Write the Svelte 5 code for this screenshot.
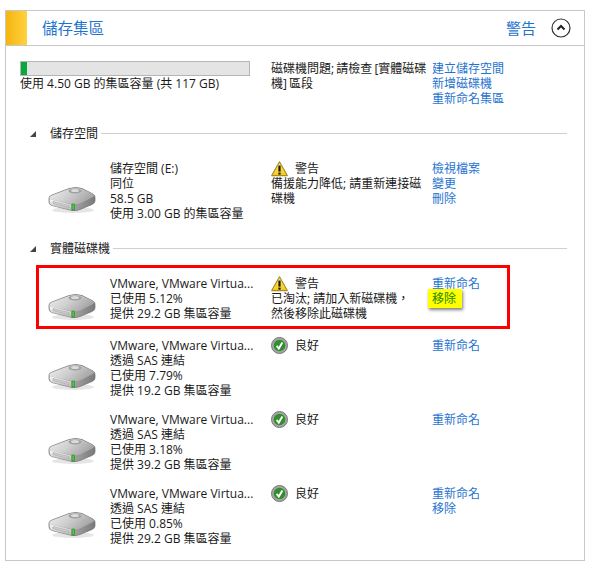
<script>
  const drives = [
    { lines: ['VMware, VMware Virtua...', '已使用 5.12%', '提供 29.2 GB 集區容量'], warn: true, status: '警告', msg: ['已淘汰; 請加入新磁碟機，', '然後移除此磁碟機'], actions: ['重新命名'] , mark: true, h: 62 },
    { lines: ['VMware, VMware Virtua...', '透過 SAS 連結', '已使用 7.79%', '提供 19.2 GB 集區容量'], status: '良好', msg: [], actions: ['重新命名'], h: 74 },
    { lines: ['VMware, VMware Virtua...', '透過 SAS 連結', '已使用 3.18%', '提供 39.2 GB 集區容量'], status: '良好', msg: [], actions: ['重新命名'], h: 74 },
    { lines: ['VMware, VMware Virtua...', '透過 SAS 連結', '已使用 0.85%', '提供 29.2 GB 集區容量'], status: '良好', msg: [], actions: ['重新命名', '移除'], h: 74 }
  ];
</script>

{#snippet disk()}
  <svg class="disk" width="48" height="28" viewBox="0 0 48 28">
    <defs>
      <linearGradient id="dtop" x1="0" y1="0" x2="1" y2="0.4">
        <stop offset="0" stop-color="#f0f0f0"/><stop offset="0.55" stop-color="#cdcdcd"/><stop offset="1" stop-color="#a6a6a6"/>
      </linearGradient>
      <linearGradient id="dfront" x1="0" y1="0" x2="0" y2="1">
        <stop offset="0" stop-color="#fafafa"/><stop offset="1" stop-color="#b5b5b5"/>
      </linearGradient>
      <linearGradient id="dside" x1="0" y1="0" x2="1" y2="0">
        <stop offset="0" stop-color="#d0d0d0"/><stop offset="1" stop-color="#7a7a7a"/>
      </linearGradient>
    </defs>
    <ellipse cx="25" cy="24" rx="21" ry="3" fill="#000" opacity="0.1"/>
    <path d="M1 12 Q1 10 4 9 L21 2.5 Q28 0.5 34 2.5 L45 8 Q47.5 9.5 47 12 L47 15 Q47 17 44 18.5 L32 23.5 Q28 25 24 24.5 L4 19.5 Q1 18.5 1 16 Z" fill="url(#dside)" stroke="#6e6e6e" stroke-width="0.7"/>
    <path d="M1.5 12 Q1.5 10.5 4 9.5 L21 3 Q28 1 34 3 L45 8 Q47 9.5 45 11 L33 17 Q29 19 24 18 L4 13.5 Q1.5 13 1.5 12 Z" fill="url(#dtop)"/>
    <ellipse cx="27" cy="5" rx="6.5" ry="2.6" fill="#a0a0a0"/>
    <ellipse cx="27" cy="4.6" rx="4" ry="1.5" fill="#dcdcdc"/>
    <path d="M2 13.5 L23 18.5 L23 24 L4 19.2 Q2 18.5 2 16.5 Z" fill="url(#dfront)"/>
    <path d="M5 15.5 L21 19.5 L21 21.5 L5 17.6 Z" fill="#cfcfcf" stroke="#929292" stroke-width="0.4"/>
    <rect x="24" y="18" width="2.6" height="6" fill="#45d03f" stroke="#1f6f1f" stroke-width="0.5"/>
  </svg>
{/snippet}

{#snippet warnIcon()}
  <svg class="sicon" width="17" height="16" viewBox="0 0 17 16">
    <defs>
      <linearGradient id="wg" x1="0" y1="0" x2="0" y2="1">
        <stop offset="0" stop-color="#ffe96e"/><stop offset="1" stop-color="#f5cb17"/>
      </linearGradient>
    </defs>
    <path d="M8.5 0.8 L16.3 14.6 L0.7 14.6 Z" fill="url(#wg)" stroke="#a68a2c" stroke-width="1.1" stroke-linejoin="round"/>
    <rect x="7.4" y="4.6" width="2.2" height="6" fill="#161616"/>
    <rect x="7.4" y="11.6" width="2.2" height="2" fill="#161616"/>
  </svg>
{/snippet}

{#snippet okIcon()}
  <svg class="sicon" width="17" height="17" viewBox="0 0 17 17">
    <circle cx="8.5" cy="8.5" r="8" fill="#a5a5a5" stroke="#777"/>
    <circle cx="8.5" cy="8.5" r="5.8" fill="#2f8f2a"/>
    <path d="M5.6 8.8 L7.8 11.6 L11.4 5.4" fill="none" stroke="#fff" stroke-width="1.9"/>
  </svg>
{/snippet}

<div class="page">
  <section class="panel">
    <header class="head">
      <div class="tab"></div>
      <h1>儲存集區</h1>
      <span class="alert">警告</span>
      <svg class="collapse" width="20" height="20" viewBox="0 0 20 20">
        <circle cx="10" cy="10" r="9" fill="#fff" stroke="#333" stroke-width="1.2"/>
        <path d="M6.5 11.5 L10 8 L13.5 11.5" fill="none" stroke="#222" stroke-width="2"/>
      </svg>
    </header>

    <div class="summary">
      <div class="cap">
        <div class="bar"><div class="fill"></div></div>
        <p>使用 4.50 GB 的集區容量 (共 117 GB)</p>
      </div>
      <p class="issue">磁碟機問題; 請檢查 [實體磁碟<br/>機] 區段</p>
      <div class="links">
        <a href="#a">建立儲存空間</a>
        <a href="#a">新增磁碟機</a>
        <a href="#a">重新命名集區</a>
      </div>
    </div>

    <div class="sechead first"><i class="tri"></i><span>儲存空間</span><b></b></div>

    <div class="row spaces">
      <div class="ic">{@render disk()}</div>
      <div class="info">
        <div>儲存空間 (E:)</div><div>同位</div><div>58.5 GB</div><div>使用 3.00 GB 的集區容量</div>
      </div>
      <div class="st">
        <div class="sline">{@render warnIcon()}<span>警告</span></div>
        <div>備援能力降低; 請重新連接磁<br/>碟機</div>
      </div>
      <div class="links">
        <a href="#a">檢視檔案</a><a href="#a">變更</a><a href="#a">刪除</a>
      </div>
    </div>

    <div class="sechead"><i class="tri"></i><span>實體磁碟機</span><b></b></div>

    <div class="drives">
      {#each drives as d}
        <div class="row" class:marked={d.mark} style="height:{d.h}px">
          <div class="ic">{@render disk()}</div>
          <div class="info">
            {#each d.lines as l}<div>{l}</div>{/each}
          </div>
          <div class="st">
            <div class="sline">
              {#if d.warn}{@render warnIcon()}{:else}{@render okIcon()}{/if}
              <span>{d.status}</span>
            </div>
            {#each d.msg as m}<div>{m}</div>{/each}
          </div>
          <div class="links">
            {#each d.actions as a}<a href="#a">{a}</a>{/each}
            {#if d.mark}<a href="#a" class="hl">移除</a>{/if}
          </div>
          {#if d.mark}<div class="redbox"></div>{/if}
        </div>
      {/each}
    </div>
  </section>
</div>

<style>
  :global(body) { margin: 0; background: #fff; }
  .page {
    width: 604px; height: 576px; padding: 10px 0 0 5px; box-sizing: border-box; overflow: hidden;
    font: 12px/15px "Open Sans", "Noto Sans CJK TC", sans-serif; color: #1a1a1a;
  }
  .panel { width: 580px; height: 551px; box-sizing: border-box; border: 1px solid #c8c8c8; }
  .head { height: 35px; box-sizing: border-box; display: flex; align-items: center; border-bottom: 1px solid #c8c8c8; }
  .tab { width: 21px; height: 34px; background: linear-gradient(90deg, #f5b50e, #ffd23f); }
  h1 { margin: 0 0 0 15px; font-size: 15.5px; font-weight: 400; color: #1f74cf; flex: 1; }
  .alert { font-size: 15px; color: #1f74cf; margin-right: 15px; }
  .collapse { margin-right: 13px; }
  .summary { display: grid; grid-template-columns: 250px 162px 130px; padding: 15px 0 0 14px; height: 59px; }
  .bar { width: 230px; height: 15px; border: 1px solid #b5b5b5; background: #e4e4e4; box-sizing: border-box; }
  .fill { width: 6px; height: 100%; background: #0aa83a; }
  p { margin: 0; }
  .issue { white-space: nowrap; margin-left: 1px; word-spacing: -1px; }
  .links { display: flex; flex-direction: column; align-items: flex-start; }
  a { color: #1f74cf; text-decoration: none; }
  .sechead { display: flex; align-items: center; height: 15px; padding-left: 24px; }
  .sechead.first { margin-top: 6px; }
  .sechead span { margin-left: 14px; }
  .sechead b { flex: 1; height: 1px; background: #cfcfcf; margin: 0 17px 0 3px; }
  .tri { width: 0; height: 0; border-style: solid; border-width: 0 0 6px 6px; border-color: transparent transparent #444 transparent; }
  .row { display: grid; grid-template-columns: 104px 161px 161px 130px; position: relative; box-sizing: border-box; }
  .row .ic { padding-left: 42px; display: flex; align-items: flex-start; }
  .disk { margin-top: 25px; flex: none; }
  .marked .disk { margin-top: 17px; }
  .spaces { height: 100px; padding-top: 20px; }
  .spaces .disk { margin-top: 25px; }
  .drives { margin-top: 19px; }
  .drives .row { padding-top: 1px; }
  .sline { display: flex; align-items: center; gap: 7px; height: 15px; }
  .sicon { flex: none; }
  .redbox { position: absolute; left: 30px; top: -10px; width: 474px; height: 64px; border: 3px solid #f00; box-sizing: border-box; pointer-events: none; }
  .hl { background: #ff0; color: #228a00; padding: 2px 6px 2px 4px; margin: -2px 0 0 -4px; box-shadow: 1px 2px 3px rgba(0,0,0,.5); }
</style>
